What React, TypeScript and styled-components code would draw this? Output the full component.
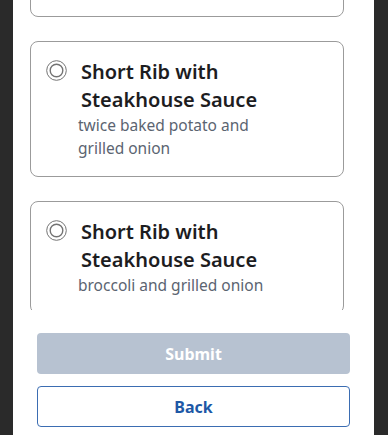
import React, { useLayoutEffect, useRef } from "react";
import styled, { createGlobalStyle } from "styled-components";

const GlobalStyle = createGlobalStyle`
  html, body { margin: 0; padding: 0; height: 100%; }
  body { background: #2a2a2a; font-family: "Noto Sans", "Open Sans", sans-serif; }
  #root { height: 100%; }
  * { box-sizing: border-box; }
`;

const Screen = styled.div`
  height: 100vh;
  display: flex;
  padding: 0 14px 0 13px;
`;

const Panel = styled.div`
  flex: 1;
  background: #ffffff;
  display: flex;
  flex-direction: column;
  min-width: 0;
`;

const ScrollArea = styled.div`
  flex: 1;
  overflow-y: auto;
  scrollbar-width: none;
  &::-webkit-scrollbar { display: none; }
`;

const List = styled.div`
  display: flex;
  flex-direction: column;
  gap: 24px;
  padding: 16px 30px 24px 17px;
`;

const Card = styled.label`
  display: flex;
  flex-direction: column;
  border: 1px solid #9b9b9b;
  border-radius: 8px;
  padding: 16px 16px 16px 15px;
  background: #fff;
  cursor: pointer;
`;

const HeaderRow = styled.div`
  display: flex;
  align-items: flex-start;
  gap: 14px;
`;

const RadioIcon = styled.svg`
  flex: none;
  width: 21px;
  height: 21px;
  margin-top: 2px;
`;

const Title = styled.div`
  font-size: 20px;
  line-height: 28px;
  font-weight: 600;
  color: #1d1d1f;
`;

const Description = styled.div`
  padding-left: 32px;
  font-size: 15.5px;
  line-height: 23px;
  color: #5b6471;
  max-width: 240px;
`;

const Footer = styled.div`
  display: flex;
  flex-direction: column;
  gap: 12px;
  padding: 23px 24px 8px;
`;

const Button = styled.button<{ $variant: "primary" | "secondary" }>`
  height: 41px;
  border-radius: 4px;
  font-family: "Noto Sans", "Open Sans", sans-serif;
  font-size: 16px;
  font-weight: 700;
  cursor: pointer;
  border: ${(p) => (p.$variant === "primary" ? "none" : "1.5px solid #3b6db2")};
  background: ${(p) => (p.$variant === "primary" ? "#b7c2d1" : "#ffffff")};
  color: ${(p) => (p.$variant === "primary" ? "#ffffff" : "#1d58a6")};
`;

const Radio = () => (
  <RadioIcon viewBox="0 0 21 21">
    <circle cx="10.5" cy="10.5" r="9.8" fill="none" stroke="#737373" strokeWidth="1" />
    <circle cx="10.5" cy="10.5" r="6.3" fill="none" stroke="#737373" strokeWidth="1.4" />
  </RadioIcon>
);

const items = [
  { desc: "mashed potato and seasonal vegetables" },
  { desc: "twice baked potato and grilled onion" },
  { desc: "broccoli and grilled onion" },
];

export default function App() {
  const scrollRef = useRef<HTMLDivElement>(null);
  const secondRef = useRef<HTMLLabelElement>(null);

  useLayoutEffect(() => {
    const s = scrollRef.current;
    const c = secondRef.current;
    if (s && c) {
      s.scrollTop = c.offsetTop - s.offsetTop - 41;
    }
  }, []);

  return (
    <>
      <GlobalStyle />
      <Screen>
        <Panel>
          <ScrollArea ref={scrollRef}>
            <List>
              {items.map((it, i) => (
                <Card key={i} ref={i === 1 ? secondRef : undefined}>
                  <HeaderRow>
                    <Radio />
                    <Title>
                      Short Rib with
                      <br />
                      Steakhouse Sauce
                    </Title>
                  </HeaderRow>
                  <Description>{it.desc}</Description>
                </Card>
              ))}
            </List>
          </ScrollArea>
          <Footer>
            <Button $variant="primary" disabled>Submit</Button>
            <Button $variant="secondary">Back</Button>
          </Footer>
        </Panel>
      </Screen>
    </>
  );
}
